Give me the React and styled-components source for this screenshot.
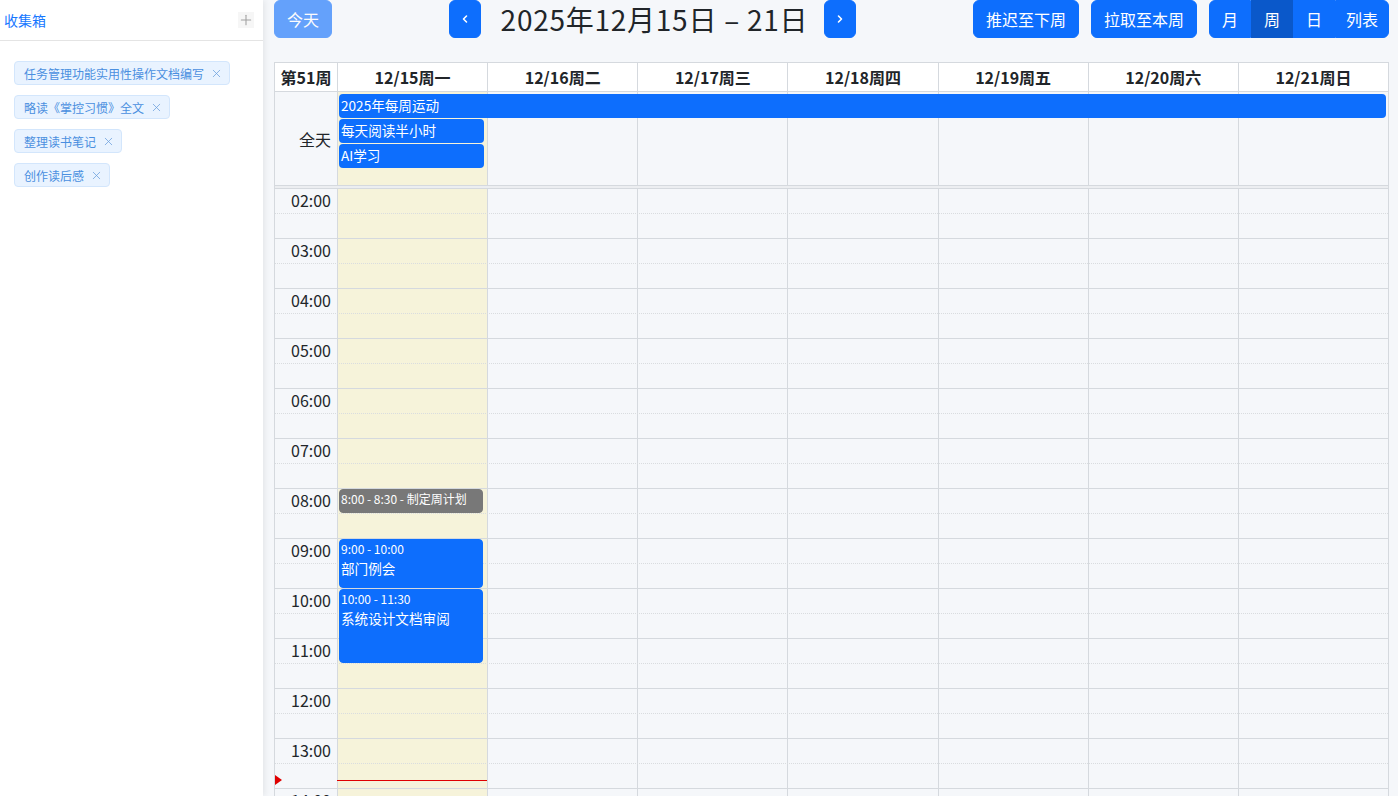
import React from "react";
import styled, { createGlobalStyle, css } from "styled-components";
import { Plus, X } from "lucide-react";

const GlobalStyle = createGlobalStyle`
  html, body { margin: 0; padding: 0; height: 100%; overflow: hidden; background: #f5f7fa; }
  body { font-family: "Noto Sans CJK SC", "Noto Sans", sans-serif; color: #212529; }
  #root { height: 100%; }
  * { box-sizing: border-box; }
`;

const Layout = styled.div`
  display: flex;
  height: 796px;
  overflow: hidden;
`;

const Sidebar = styled.aside`
  flex: 0 0 263px;
  width: 263px;
  background: #fff;
  box-shadow: 2px 0 6px rgba(0, 0, 0, 0.07);
  position: relative;
  z-index: 1;
`;

const SideHeader = styled.div`
  height: 41px;
  display: flex;
  align-items: center;
  justify-content: space-between;
  padding: 0 9px 0 4px;
  border-bottom: 1px solid #e4e4e4;
`;

const SideTitle = styled.span`
  font-size: 14px;
  color: #1677ff;
`;

const AddButton = styled.span`
  width: 16px;
  height: 16px;
  display: flex;
  align-items: center;
  justify-content: center;
  background: #f6f6f6;
  color: #a0a0a0;
`;

const TagList = styled.div`
  display: flex;
  flex-direction: column;
  align-items: flex-start;
  gap: 10px;
  padding: 20px 14px;
`;

const Tag = styled.span`
  display: inline-flex;
  align-items: center;
  gap: 6px;
  height: 24px;
  padding: 0 6px 0 9px;
  font-size: 12px;
  color: #4a8fe0;
  background: #e9f3ff;
  border: 1px solid #d3e6fc;
  border-radius: 4px;
  svg { color: #6a9fdc; }
`;

const Main = styled.main`
  flex: 1;
  min-width: 0;
  padding: 0 9px 0 11px;
  display: flex;
  flex-direction: column;
`;

const Toolbar = styled.div`
  flex-shrink: 0;
  display: flex;
  align-items: center;
  justify-content: space-between;
  height: 38px;
  margin-bottom: 24px;
`;

const Chunk = styled.div`
  display: flex;
  align-items: center;
  gap: ${(p) => p.$gap || 0}px;
`;

const Button = styled.button`
  height: 38px;
  padding: 0 ${(p) => p.$pad || 12}px;
  border: 1px solid ${(p) => (p.$active ? "#0a58ca" : "#0d6efd")};
  background: ${(p) => (p.$active ? "#0a58ca" : "#0d6efd")};
  color: #fff;
  font-family: inherit;
  font-size: 16px;
  border-radius: 6px;
  display: flex;
  align-items: center;
  justify-content: center;
  ${(p) =>
    p.$disabled &&
    css`
      opacity: 0.62;
    `}
  ${(p) =>
    p.$icon &&
    css`
      width: 32px;
      padding: 0;
    `}
`;

const Group = styled.div`
  display: flex;
  ${Button} { border-radius: 0; }
  ${Button}:first-child { border-radius: 6px 0 0 6px; }
  ${Button}:last-child { border-radius: 0 6px 6px 0; }
`;

const Title = styled.h2`
  margin: 0 16px 0 20px;
  font-size: 28px;
  font-weight: 400;
  letter-spacing: 0.75px;
  color: #212529;
  line-height: 38px;
  white-space: nowrap;
`;

const Calendar = styled.div`
  flex: 1;
  min-height: 0;
  border: 1px solid #d5d9de;
  border-bottom: none;
  display: flex;
  flex-direction: column;
  overflow: hidden;
  & > * { flex-shrink: 0; }
`;

const COLS = "62px repeat(7, 1fr)";

const HeaderRow = styled.div`
  display: grid;
  grid-template-columns: ${COLS};
  background: #fff;
  border-bottom: 1px solid #d5d9de;
`;

const HeaderCell = styled.div`
  height: 28px;
  display: flex;
  align-items: center;
  justify-content: center;
  font-size: 16px;
  font-weight: 700;
  color: #212529;
  ${(p) => !p.$axis && css`border-left: 1px solid #d5d9de;`}
`;

const AllDay = styled.div`
  display: grid;
  grid-template-columns: ${COLS};
  grid-template-rows: 1px 24px 24px 24px 1fr;
  row-gap: 1px;
  height: 93px;
`;

const DayBg = styled.div`
  grid-column: ${(p) => p.$col};
  grid-row: 1 / -1;
  border-left: 1px solid #d5d9de;
  background: ${(p) => (p.$today ? "#f6f3da" : "transparent")};
`;

const AllDayLabel = styled.div`
  grid-column: 1;
  grid-row: 1 / -1;
  align-self: center;
  text-align: right;
  padding-right: 6px;
  font-size: 16px;
`;

const AllDayEvent = styled.div`
  grid-column: ${(p) => p.$cols};
  grid-row: ${(p) => p.$row};
  margin: 0 ${(p) => p.$mr}px 0 2px;
  background: #0d6efd;
  border-radius: 4px;
  color: #fff;
  font-size: 13.6px;
  line-height: 23px;
  padding: 0 2px;
  white-space: nowrap;
  overflow: hidden;
  position: relative;
  z-index: 1;
`;

const Divider = styled.div`
  height: 4px;
  background: #eceef1;
  border-top: 1px solid #d5d9de;
  border-bottom: 1px solid #d5d9de;
`;

const TimeGrid = styled.div`
  display: grid;
  grid-template-columns: ${COLS};
  grid-template-rows: repeat(${(p) => p.$rows}, 25px);
`;

const SlotLine = styled.div`
  grid-column: 1 / -1;
  grid-row: ${(p) => p.$row};
  border-bottom: 1px ${(p) => (p.$half ? "dotted" : "solid")} ${(p) => (p.$half ? "#d9dcdf" : "#d5d9de")};
  position: relative;
  z-index: 1;
`;

const TimeLabel = styled.div`
  grid-column: 1;
  grid-row: ${(p) => p.$row};
  text-align: right;
  padding-right: 6px;
  font-size: 16px;
  line-height: 23px;
  color: #212529;
  position: relative;
  z-index: 2;
`;

const TimedEvent = styled.div`
  grid-column: ${(p) => p.$col};
  grid-row: ${(p) => p.$rows};
  margin: 0 4px 1px 2px;
  background: ${(p) => (p.$gray ? "#787878" : "#0d6efd")};
  border: 1px solid ${(p) => (p.$gray ? "#787878" : "#0d6efd")};
  border-radius: 4px;
  color: #fff;
  padding: 0 1px;
  overflow: hidden;
  position: relative;
  z-index: 3;
`;

const EventTime = styled.div`
  font-size: 12px;
  line-height: 18px;
  white-space: nowrap;
`;

const EventTitle = styled.div`
  font-size: 13.6px;
  line-height: 20px;
  white-space: nowrap;
`;

const NowLine = styled.div`
  grid-column: ${(p) => p.$col};
  grid-row: ${(p) => p.$row};
  align-self: start;
  margin-top: 16px;
  height: 1px;
  background: #e00000;
  position: relative;
  z-index: 4;
`;

const NowArrow = styled.div`
  grid-column: 1;
  grid-row: ${(p) => p.$row};
  justify-self: start;
  align-self: start;
  margin-top: 11px;
  width: 0;
  height: 0;
  border-top: 5px solid transparent;
  border-bottom: 5px solid transparent;
  border-left: 7px solid #e00000;
  position: relative;
  z-index: 4;
`;

const Chevron = ({ dir }) => (
  <svg width="8" height="10" viewBox="0 0 8 10" fill="none" stroke="#fff" strokeWidth="1.6" strokeLinecap="round" strokeLinejoin="round">
    {dir === "left" ? <polyline points="5.5,2 2.5,5 5.5,8" /> : <polyline points="2.5,2 5.5,5 2.5,8" />}
  </svg>
);

const inbox = ["任务管理功能实用性操作文档编写", "略读《掌控习惯》全文", "整理读书笔记", "创作读后感"];
const days = ["12/15周一", "12/16周二", "12/17周三", "12/18周四", "12/19周五", "12/20周六", "12/21周日"];

const START_HOUR = 2;
const END_HOUR = 24;
const rowOf = (h) => Math.floor((h - START_HOUR) * 2) + 1;

const timed = [
  { start: 8, end: 8.5, time: "8:00 - 8:30 - 制定周计划", gray: true },
  { start: 9, end: 10, time: "9:00 - 10:00", title: "部门例会" },
  { start: 10, end: 11.5, time: "10:00 - 11:30", title: "系统设计文档审阅" },
];

export default function App() {
  const rows = (END_HOUR - START_HOUR) * 2;
  const slots = Array.from({ length: rows }, (_, i) => i);
  return (
    <>
      <GlobalStyle />
      <Layout>
        <Sidebar>
          <SideHeader>
            <SideTitle>收集箱</SideTitle>
            <AddButton>
              <Plus size={16} strokeWidth={1.6} />
            </AddButton>
          </SideHeader>
          <TagList>
            {inbox.map((t) => (
              <Tag key={t}>
                {t}
                <X size={13} strokeWidth={1.4} />
              </Tag>
            ))}
          </TagList>
        </Sidebar>
        <Main>
          <Toolbar>
            <Chunk>
              <Button $disabled>今天</Button>
            </Chunk>
            <Chunk>
              <Button $icon>
                <Chevron dir="left" />
              </Button>
              <Title>2025年12月15日 – 21日</Title>
              <Button $icon>
                <Chevron dir="right" />
              </Button>
            </Chunk>
            <Chunk $gap={12}>
              <Button>推迟至下周</Button>
              <Button>拉取至本周</Button>
              <Group>
                <Button>月</Button>
                <Button $active>周</Button>
                <Button>日</Button>
                <Button $pad={10}>列表</Button>
              </Group>
            </Chunk>
          </Toolbar>
          <Calendar>
            <HeaderRow>
              <HeaderCell $axis>第51周</HeaderCell>
              {days.map((d) => (
                <HeaderCell key={d}>{d}</HeaderCell>
              ))}
            </HeaderRow>
            <AllDay>
              <AllDayLabel>全天</AllDayLabel>
              {days.map((d, i) => (
                <DayBg key={d} $col={i + 2} $today={i === 0} />
              ))}
              <AllDayEvent $cols="2 / 9" $row={2} $mr={2}>2025年每周运动</AllDayEvent>
              <AllDayEvent $cols="2 / 3" $row={3} $mr={3}>每天阅读半小时</AllDayEvent>
              <AllDayEvent $cols="2 / 3" $row={4} $mr={3}>AI学习</AllDayEvent>
            </AllDay>
            <Divider />
            <TimeGrid $rows={rows}>
              {days.map((d, i) => (
                <DayBg key={d} $col={i + 2} $today={i === 0} />
              ))}
              {slots.map((i) => (
                <SlotLine key={`l${i}`} $row={i + 1} $half={i % 2 === 0} />
              ))}
              {slots
                .filter((i) => i % 2 === 0)
                .map((i) => (
                  <TimeLabel key={`t${i}`} $row={i + 1}>
                    {String(START_HOUR + i / 2).padStart(2, "0")}:00
                  </TimeLabel>
                ))}
              {timed.map((e) => (
                <TimedEvent key={e.time} $col={2} $rows={`${rowOf(e.start)} / ${rowOf(e.end)}`} $gray={e.gray}>
                  <EventTime>{e.time}</EventTime>
                  {e.title && <EventTitle>{e.title}</EventTitle>}
                </TimedEvent>
              ))}
              <NowArrow $row={rowOf(13.5)} />
              <NowLine $col={2} $row={rowOf(13.5)} />
            </TimeGrid>
          </Calendar>
        </Main>
      </Layout>
    </>
  );
}
